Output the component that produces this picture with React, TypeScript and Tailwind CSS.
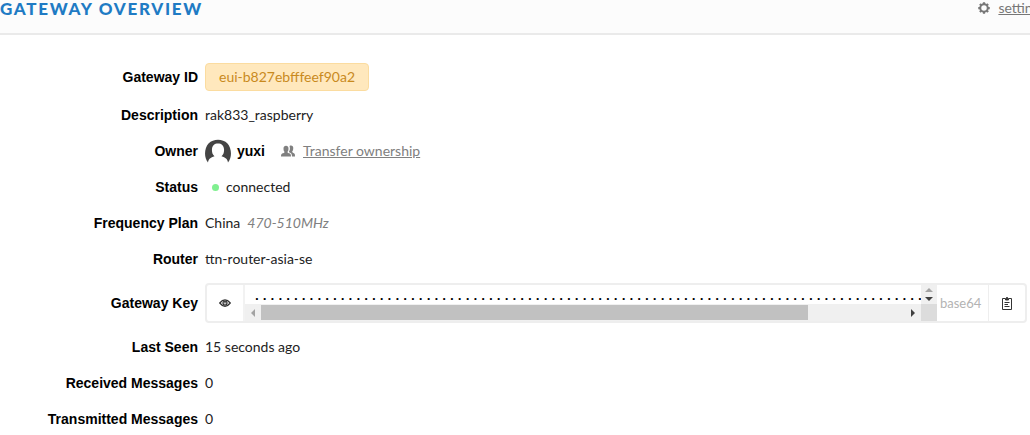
import { useState } from 'react';
import type { ReactNode } from 'react';

interface RowProps {
  label: string;
  children: ReactNode;
}

function Row({ label, children }: RowProps) {
  return (
    <div className="flex min-h-6 items-center">
      <dt className="w-[198px] shrink-0 text-right font-['Liberation_Sans',sans-serif] text-sm font-bold text-black">
        {label}
      </dt>
      <dd className="ml-[7px] flex min-w-0 flex-1 items-center">{children}</dd>
    </div>
  );
}

function GearIcon() {
  const teeth = [0, 45, 90, 135, 180, 225, 270, 315];
  return (
    <svg viewBox="0 0 24 24" className="h-3 w-3" fill="none" stroke="#777777">
      <circle cx="12" cy="12" r="7.5" strokeWidth="4" />
      {teeth.map((angle) => (
        <path key={angle} d="M12 4V0.5" strokeWidth="4.5" transform={`rotate(${angle} 12 12)`} />
      ))}
    </svg>
  );
}

function PeopleIcon() {
  return (
    <svg viewBox="0 0 28 24" className="h-3 w-3.5" fill="currentColor">
      <path d="M0 23C0 18 1 17.5 4 16.5C6.5 15.7 7 15.5 7 13.5C5.5 12 5 10 5 7C5 3.5 7 1.5 10 1.5S15 3.5 15 7C15 10 14.5 12 13 13.5C13 15.5 13.5 15.7 16 16.5C19 17.5 20 18 20 23Z" />
      <path d="M17 2C18 1.3 19 1 20 1C23 1 24.5 3 24.5 6C24.5 9 24 11 22.5 12.5C22.5 14.5 23 15 25 16C27.5 17 28 18 28 23H22C22 17.5 20.5 16 17 14.8C16 14.3 15.8 14 16 13C17.5 11 17.8 9 17.8 6.5C17.8 4.5 17.5 3 17 2Z" />
    </svg>
  );
}

function Avatar() {
  return (
    <svg viewBox="0 0 26 24" className="h-6 w-[26px]">
      <path
        fill="#444444"
        d="M3 23.5C-1.5 18 -0.5 9 3.5 4.5C8.5 -0.5 17.5 -0.5 22.5 4.5C26.5 9 27.5 18 23 23.5C22.5 20 20.5 18.5 16.5 17.2C18.5 15.5 19.3 13 19 10C18.7 6.5 16.5 4.5 13 4.5S7.3 6.5 7 10C6.7 13 7.5 15.5 9.5 17.2C5.5 18.5 3.5 20 3 23.5Z"
      />
    </svg>
  );
}

function EyeIcon() {
  return (
    <svg viewBox="0 0 24 16" className="h-2 w-3" fill="none" stroke="#333333" strokeWidth="2.5">
      <path d="M1.5 8C5 3.5 8.5 1.5 12 1.5S19 3.5 22.5 8C19 12.5 15.5 14.5 12 14.5S5 12.5 1.5 8Z" />
      <circle cx="12" cy="8" r="4" />
      <path d="M12 5V9" />
    </svg>
  );
}

function ClipboardIcon() {
  return (
    <svg viewBox="0 0 11 13" className="h-[13px] w-[11px]" fill="none" stroke="#333333">
      <path d="M3 1.5H0.5V12.5H9.5V1.5H7" />
      <path d="M3.5 3V1.5H4.5V0.5H5.5V1.5H6.5V3Z" fill="#333333" />
      <path d="M2.5 5.5H7.5M2.5 7.5H6M2.5 9.5H7.5" />
    </svg>
  );
}

const maskedKey = '.'.repeat(86);

export default function App() {
  const [visible, setVisible] = useState(false);

  return (
    <main className="overflow-hidden bg-white font-[Lato,sans-serif] text-sm text-[#222222]">
      {/* Header */}
      <header className="flex h-[35px] items-start justify-between border-b-2 border-[#eaeaea] bg-[#fcfcfc]">
        <h1 className="text-[17px] leading-[18px] font-black tracking-widest text-[#1f7bc4] uppercase">
          Gateway Overview
        </h1>
        <a href="#settings" className="-mr-4 flex items-center gap-2 leading-4 text-[#777777]">
          <GearIcon />
          <span className="underline">settings</span>
        </a>
      </header>

      {/* Details */}
      <dl className="flex flex-col gap-3 pt-7 pr-[3px]">
        <Row label="Gateway ID">
          <span className="rounded border border-[#fbdca0] bg-[#ffe8bd] px-[13px] py-[3px] leading-5 text-[#c98a1d]">
            eui-b827ebfffeef90a2
          </span>
        </Row>
        <Row label="Description">rak833_raspberry</Row>
        <Row label="Owner">
          <Avatar />
          <span className="ml-1.5 font-['Liberation_Sans',sans-serif] font-bold text-black">yuxi</span>
          <a href="#transfer" className="ml-4 flex items-center gap-2 text-[#808080]">
            <PeopleIcon />
            <span className="underline">Transfer ownership</span>
          </a>
        </Row>
        <Row label="Status">
          <span className="mr-[7px] ml-[7px] h-[7px] w-[7px] rounded-full bg-[#80f090]" />
          connected
        </Row>
        <Row label="Frequency Plan">
          China <em className="ml-[7px] text-[#808080]">470-510MHz</em>
        </Row>
        <Row label="Router">ttn-router-asia-se</Row>
        <Row label="Gateway Key">
          <div className="flex h-10 min-w-0 flex-1 rounded border-2 border-[#eeeeee]">
            <button
              type="button"
              aria-label="Toggle key visibility"
              aria-pressed={visible}
              onClick={() => setVisible(!visible)}
              className="flex w-[38px] shrink-0 items-center justify-center border-r-2 border-[#f2f2f2]"
            >
              <EyeIcon />
            </button>
            <div className="flex min-w-0 flex-1 flex-col">
              <div className="flex h-[19px]">
                <code className="min-w-0 flex-1 overflow-hidden pl-2 font-['Liberation_Mono',monospace] text-[13px] leading-6 font-bold whitespace-nowrap text-black">
                  {maskedKey}
                </code>
                <div className="flex w-4 flex-col items-center justify-around bg-[#f0f0f0]">
                  <svg viewBox="0 0 8 4" className="h-1 w-2 fill-[#a3a3a3]"><path d="M0 4L4 0L8 4Z" /></svg>
                  <svg viewBox="0 0 8 4" className="h-1 w-2 fill-[#404040]"><path d="M0 0L4 4L8 0Z" /></svg>
                </div>
              </div>
              <div className="flex flex-1 bg-[#f0f0f0]">
                <div className="flex w-4 items-center justify-center">
                  <svg viewBox="0 0 4 8" className="h-2 w-1 fill-[#a3a3a3]"><path d="M4 0L0 4L4 8Z" /></svg>
                </div>
                <div className="flex flex-1 py-px">
                  <div className="w-[85%] bg-[#c1c1c1]" />
                </div>
                <div className="flex w-4 items-center justify-center">
                  <svg viewBox="0 0 4 8" className="h-2 w-1 fill-[#404040]"><path d="M0 0L4 4L0 8Z" /></svg>
                </div>
                <div className="w-4 bg-[#dcdcdc]" />
              </div>
            </div>
            <span className="flex w-[51px] shrink-0 items-center pl-[3px] text-[13px] text-[#b3b3b3]">base64</span>
            <button
              type="button"
              aria-label="Copy key"
              className="flex w-[37px] shrink-0 items-center justify-center border-l border-[#eeeeee]"
            >
              <ClipboardIcon />
            </button>
          </div>
        </Row>
        <Row label="Last Seen">15 seconds ago</Row>
        <Row label="Received Messages">0</Row>
        <Row label="Transmitted Messages">0</Row>
      </dl>
    </main>
  );
}
